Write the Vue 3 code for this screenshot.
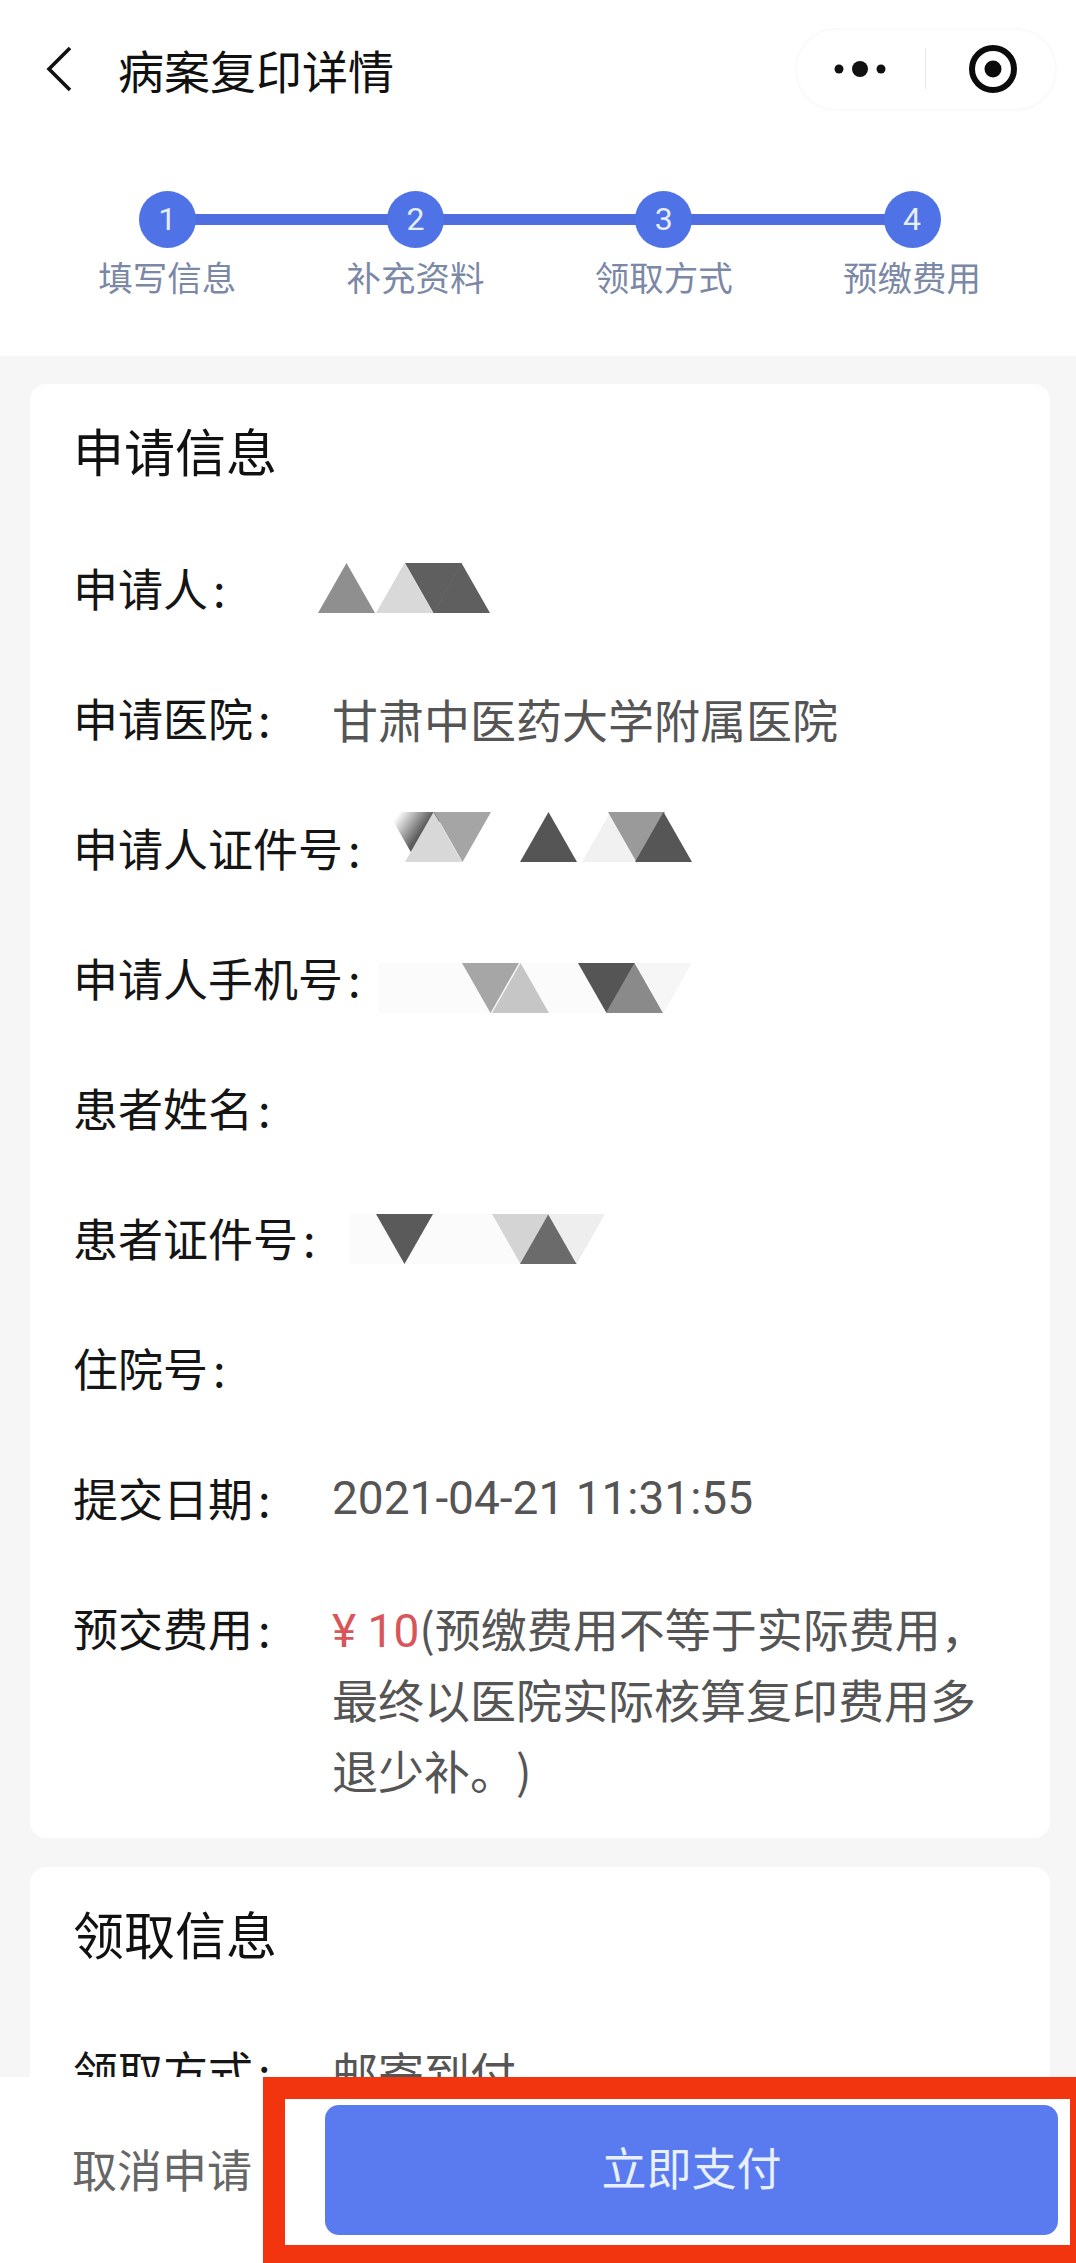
<template>
  <div class="page">
    <header class="top">
      <div class="nav">
        <svg class="back" width="28" height="46" viewBox="0 0 28 46">
          <path d="M25 2 L4 23 L25 44" fill="none" stroke="#111" stroke-width="3.6" />
        </svg>
        <h1 class="nav-title">病案复印详情</h1>
        <div class="capsule">
          <svg class="dots" width="56" height="18" viewBox="0 0 56 18">
            <circle cx="7" cy="9" r="4.5" fill="#111" />
            <circle cx="28" cy="9" r="8" fill="#111" />
            <circle cx="49" cy="9" r="4.5" fill="#111" />
          </svg>
          <span class="capsule-line"></span>
          <svg class="target" width="50" height="50" viewBox="0 0 50 50">
            <circle cx="25" cy="25" r="21" fill="none" stroke="#0b0b0b" stroke-width="6" />
            <circle cx="25" cy="25" r="8.5" fill="#0b0b0b" />
          </svg>
        </div>
      </div>
      <ol class="steps">
        <li v-for="(s, i) in steps" :key="s" class="step">
          <span class="step-num">{{ i + 1 }}</span>
          <span class="step-label">{{ s }}</span>
        </li>
      </ol>
    </header>

    <main class="content">
      <section class="card">
        <h2 class="card-title">申请信息</h2>
        <div v-for="r in rows" :key="r.label" class="row">
          <span class="label">{{ r.label }}<i class="colon">:</i></span>
          <span v-if="r.fee" class="value fee-value"><b class="fee">¥ 10</b>(预缴费用不等于实际费用，最终以医院实际核算复印费用多退少补。)</span>
          <span v-else-if="r.value" class="value" :class="{ num: r.num }">{{ r.value }}</span>
          <svg v-if="r.mask" class="mask" :style="{ top: r.top + 'px' }" width="420" height="50" viewBox="0 0 420 50">
            <defs v-if="r.fade">
              <linearGradient id="fade-dark" x1="0" y1="0" x2="1" y2="0.6">
                <stop offset="0.15" stop-color="#ffffff" />
                <stop offset="0.6" stop-color="#5c5c5c" />
              </linearGradient>
            </defs>
            <rect v-if="r.smear" :x="r.smear[0]" y="0" :width="r.smear[1]" height="50" fill="#fbfbfb" />
            <polygon v-for="(t, k) in r.mask" :key="k" :points="tri(t)" :fill="t[2]" />
          </svg>
        </div>
      </section>

      <section class="card card-second">
        <h2 class="card-title">领取信息</h2>
        <div class="row">
          <span class="label">领取方式<i class="colon">:</i></span>
          <span class="value">邮寄到付</span>
        </div>
      </section>
    </main>

    <footer class="bar">
      <span class="cancel">取消申请</span>
      <button class="pay" type="button">立即支付</button>
      <div class="highlight"></div>
    </footer>
  </div>
</template>

<script setup>
const steps = ['填写信息', '补充资料', '领取方式', '预缴费用'];

// each mask triangle: [left x of the base, 'u' or 'd', fill]
const rows = [
  {
    label: '申请人',
    top: 40,
    mask: [[0, 'u', '#8f8f8f'], [58, 'u', '#d9d9d9'], [87, 'd', '#5f5f5f'], [115, 'u', '#5f5f5f']],
  },
  { label: '申请医院', value: '甘肃中医药大学附属医院' },
  {
    label: '申请人证件号',
    top: 29,
    fade: true,
    mask: [[70, 'd', 'url(#fade-dark)'], [87, 'u', '#d8d8d8'], [116, 'd', '#a5a5a5'], [202, 'u', '#555555'], [264, 'u', '#f1f1f1'], [290, 'd', '#9a9a9a'], [317, 'u', '#565656']],
  },
  {
    label: '申请人手机号',
    top: 50,
    mask: [[144, 'd', '#a6a6a6'], [174, 'u', '#c6c6c6'], [260, 'd', '#555555'], [288, 'u', '#8a8a8a'], [317, 'd', '#f6f6f6']],
    smear: [60, 280],
  },
  { label: '患者姓名' },
  {
    label: '患者证件号',
    top: 41,
    mask: [[58, 'd', '#5a5a5a'], [174, 'd', '#d4d4d4'], [202, 'u', '#6b6b6b'], [230, 'd', '#eeeeee']],
    smear: [32, 200],
  },
  { label: '住院号' },
  { label: '提交日期', value: '2021-04-21 11:31:55', num: true },
  { label: '预交费用', fee: true },
];

const tri = ([x, dir]) =>
  dir === 'u'
    ? `${x},50 ${x + 28.5},0 ${x + 57},50`
    : `${x},0 ${x + 57},0 ${x + 28.5},50`;
</script>

<style scoped>
.page {
  position: relative;
  width: 1076px;
  height: 2263px;
  overflow: hidden;
  background: #f6f6f6;
  font-family: "Noto Sans CJK SC", "Liberation Sans", sans-serif;
}

.top {
  height: 356px;
  background: #fff;
}

.nav {
  display: flex;
  align-items: center;
  height: 138px;
  padding: 0 19px 0 45px;
}

.back {
  flex: none;
}

.nav-title {
  flex: 1;
  margin: 0 0 0 45px;
  font-size: 46px;
  font-weight: 400;
  color: #111;
}

.capsule {
  display: flex;
  align-items: center;
  width: 262px;
  height: 83px;
  box-sizing: border-box;
  border: 2px solid #fafafa;
  border-radius: 41px;
}

.dots {
  margin-left: 35px;
}

.capsule-line {
  width: 1px;
  height: 40px;
  margin: 0 42px 0 37px;
  background: #e6e6e6;
}

.steps {
  position: relative;
  display: grid;
  grid-template-columns: repeat(4, 248.3px);
  margin: 0;
  padding: 53px 0 0 43px;
  list-style: none;
}

.steps::before {
  content: "";
  position: absolute;
  left: 167px;
  right: 164px;
  top: 76px;
  height: 11px;
  background: #4f6fe0;
}

.step {
  position: relative;
  display: flex;
  flex-direction: column;
  align-items: center;
}

.step-num {
  width: 57px;
  height: 57px;
  border-radius: 50%;
  background: #4f72e6;
  color: #e6edfb;
  font-family: "Roboto", sans-serif;
  font-size: 32px;
  line-height: 57px;
  text-align: center;
}

.step-label {
  margin-top: 3px;
  font-size: 34.5px;
  line-height: 50px;
  color: #7b88a6;
}

.content {
  padding: 28px 26px 0 30px;
}

.card {
  padding: 31px 0 0 43px;
  border-radius: 16px;
  background: #fff;
}

.card-second {
  margin-top: 29px;
}

.card-title {
  margin: 0 0 38px;
  font-size: 51px;
  font-weight: 400;
  line-height: 70px;
  color: #111;
}

.row {
  position: relative;
  display: flex;
  padding: 29px 0;
}

.label {
  flex: none;
  min-width: 259px;
  font-size: 45px;
  line-height: 72px;
  color: #151515;
  white-space: nowrap;
}

.colon {
  padding-left: 5px;
  font-style: normal;
}

.value {
  width: 665px;
  font-size: 46px;
  line-height: 72px;
  color: #555;
}

.fee-value {
  margin-bottom: 4px;
  line-height: 71px;
  text-spacing-trim: space-all;
}

.num {
  font-family: "Roboto", sans-serif;
  font-size: 46px;
}

.fee {
  font-family: "Roboto", "Noto Sans CJK SC", sans-serif;
  font-weight: 400;
  line-height: 1;
  color: #d8555a;
}

.mask {
  position: absolute;
  left: 245px;
}

.bar {
  position: absolute;
  left: 0;
  right: 0;
  bottom: 0;
  display: flex;
  align-items: center;
  height: 186px;
  background: #fff;
}

.cancel {
  flex: none;
  width: 252px;
  padding: 0 0 4px 72px;
  box-sizing: border-box;
  font-size: 45px;
  color: #666;
  white-space: nowrap;
}

.pay {
  width: 733px;
  height: 130px;
  margin-left: 73px;
  padding: 0 0 7px;
  border: 0;
  border-radius: 14px;
  background: #5a7bf0;
  color: #e8f0fb;
  font-family: inherit;
  font-size: 45px;
}

.highlight {
  position: absolute;
  left: 263px;
  right: 0;
  top: 0;
  bottom: 0;
  box-sizing: border-box;
  border: solid #f2350f;
  border-width: 22px 6px 18px 22px;
}
</style>
